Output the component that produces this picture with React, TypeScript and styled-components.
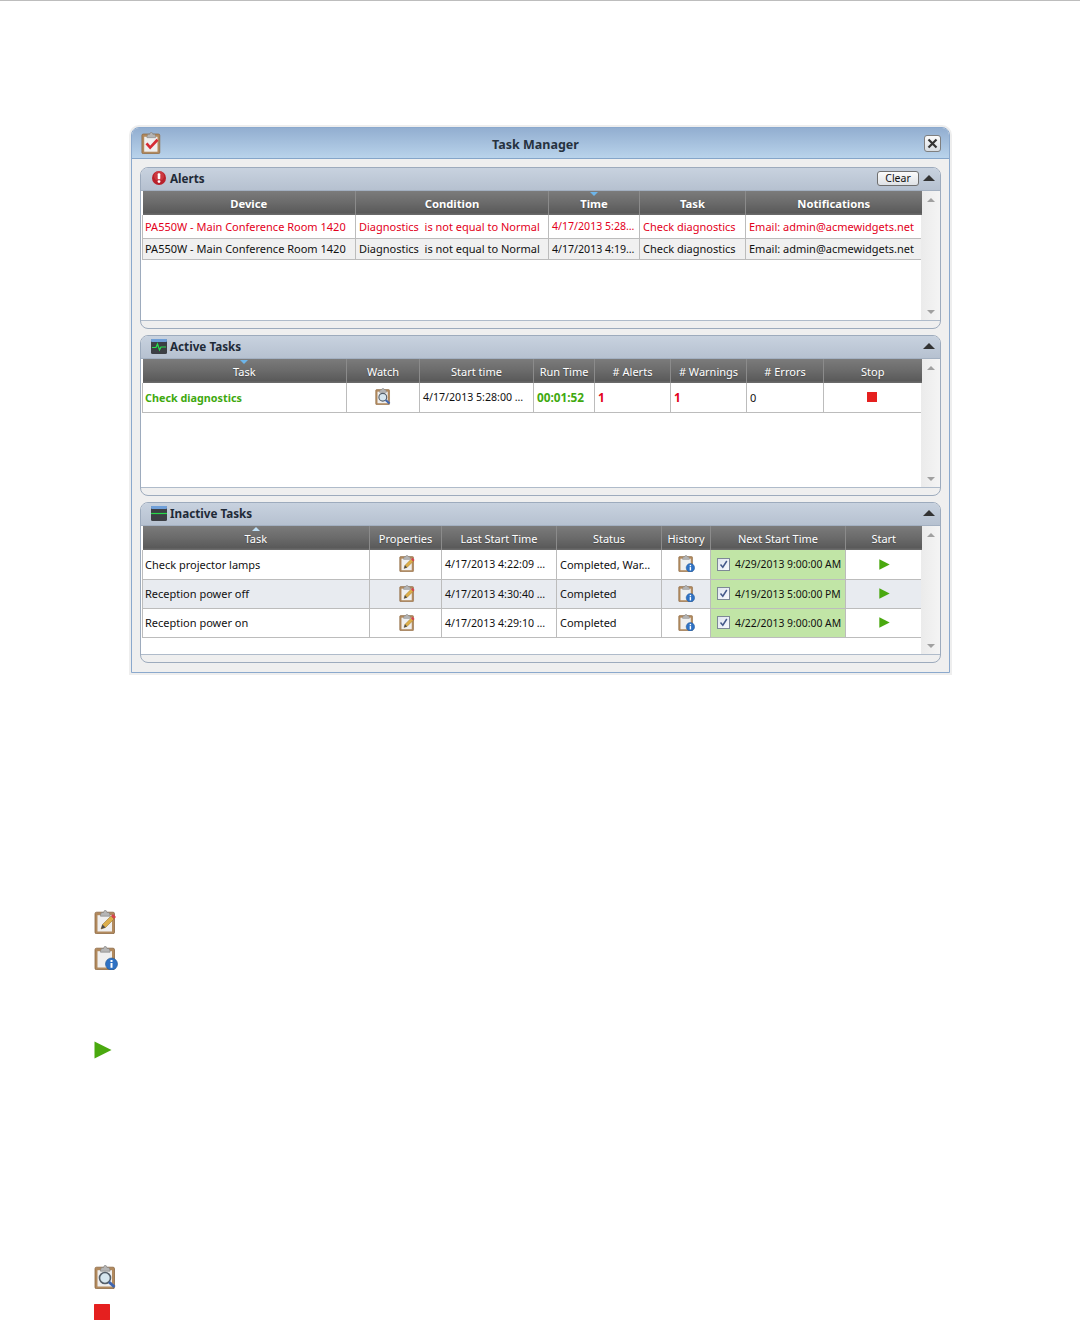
import React from "react";
import styled, { createGlobalStyle } from "styled-components";

const GlobalStyle = createGlobalStyle`
  html, body {
    margin: 0;
    padding: 0;
    background: #ffffff;
  }
  body {
    font-family: "Noto Sans", "Liberation Sans", sans-serif;
    font-size: 11px;
    color: #111111;
  }
`;

const Page = styled.div`
  height: 1322px;
  border-top: 1px solid #bdbdbd;
  box-sizing: border-box;
  padding: 126px 0 0 131px;
  overflow: hidden;
`;

const Window = styled.div`
  width: 819px;
  height: 546px;
  box-sizing: border-box;
  border: 1px solid #8ba9cd;
  border-radius: 8px 8px 0 0;
  background: #efefef;
  box-shadow: 0 0 0 2px #eeeeee;
`;

const TitleBar = styled.div`
  height: 30px;
  display: flex;
  align-items: center;
  padding: 0 8px 0 9px;
  background: linear-gradient(#92aed0, #b9d3eb);
  border-bottom: 1px solid #85a5c9;
  border-radius: 7px 7px 0 0;
`;

const Title = styled.div`
  flex: 1;
  text-align: center;
  font-weight: 700;
  font-size: 12.5px;
  color: #27323f;
  padding: 2px 16px 0 0;
`;

const CloseButton = styled.button`
  width: 17px;
  height: 17px;
  padding: 0;
  display: flex;
  align-items: center;
  justify-content: center;
  border: 1px solid #7f7f7f;
  border-radius: 3px;
  background: linear-gradient(#fbfbfb, #d8dde2);
`;

const Content = styled.div`
  display: flex;
  flex-direction: column;
  padding: 8px 8px 0 8px;
`;

const Section = styled.section<{ $bodyHeight: number; $top?: number }>`
  width: 801px;
  margin-top: ${(p) => p.$top ?? 0}px;
  box-sizing: border-box;
  border: 1px solid #9dabbd;
  border-radius: 8px;
  display: flex;
  flex-direction: column;
  background: #efefef;

  & > main {
    height: ${(p) => p.$bodyHeight}px;
  }
`;

const SectionHeader = styled.header`
  box-sizing: content-box;
  display: flex;
  align-items: center;
  padding: 0 5px 2px 10px;
  height: 20px;
  background: linear-gradient(#c8d2df, #b6c1d0);
  border-bottom: 1px solid #a3b0c1;
  border-radius: 7px 7px 0 0;
`;

const IconSlot = styled.span`
  width: 16px;
  margin-right: 3px;
  display: flex;
  justify-content: center;
`;

const SectionTitle = styled.span`
  flex: 1;
  font-weight: 700;
  font-size: 11.7px;
  color: #1f2a37;
`;

const ClearButton = styled.button`
  width: 42px;
  height: 15px;
  margin-right: 4px;
  padding: 0;
  font: 10.5px/13px "Noto Sans", sans-serif;
  color: #111111;
  border: 1px solid #6f6f6f;
  border-radius: 3px;
  background: linear-gradient(#fbfbfb, #dfe2e6);
`;

const Collapse = styled.span`
  width: 0;
  height: 0;
  border-left: 6px solid transparent;
  border-right: 6px solid transparent;
  border-bottom: 6px solid #333333;
`;

const SectionBody = styled.main`
  display: flex;
  background: #ffffff;
  padding-left: 1px;
  border-bottom: 1px solid #afbbca;
`;

const TableArea = styled.div`
  flex: 1;
  min-width: 0;
`;

const Grid = styled.table`
  table-layout: fixed;
  border-collapse: collapse;
  width: 779px;
  font-size: 11px;
`;

const HeadCell = styled.th<{ $bold?: boolean }>`
  position: relative;
  height: 24px;
  padding: 1px 0 0;
  box-sizing: border-box;
  font-weight: ${(p) => (p.$bold ? 700 : 400)};
  font-size: ${(p) => (p.$bold ? 11.25 : 11)}px;
  color: #ffffff;
  text-shadow: 0 1px 1px #4a4a4a;
  background: linear-gradient(#7b7b7b 0%, #6a6a6a 50%, #5a5a5a 90%, #6e6e6e 100%);
  border-right: 1px solid #8b8b8b;
  &:first-child {
    box-shadow: -1px 0 0 #6a6a6a;
  }
  &:last-child {
    border-right: none;
  }
`;

const SortMark = styled.span<{ $up?: boolean }>`
  position: absolute;
  top: 1px;
  left: 50%;
  margin-left: -4px;
  width: 0;
  height: 0;
  border-left: 4px solid transparent;
  border-right: 4px solid transparent;
  ${(p) =>
    p.$up
      ? "border-bottom: 4px solid #bfe0f7;"
      : "border-top: 4px solid #6db5ea;"}
`;

const Row = styled.tr<{ $height: number; $bg?: string; $color?: string }>`
  height: ${(p) => p.$height}px;
  background: ${(p) => p.$bg || "#ffffff"};
  color: ${(p) => p.$color || "#111111"};
`;

const Cell = styled.td<{ $green?: boolean; $center?: boolean; $strong?: string }>`
  padding: 0 0 0 3px;
  box-sizing: border-box;
  border: 1px solid #bcbcbc;
  border-top: none;
  white-space: nowrap;
  overflow: hidden;
  text-align: ${(p) => (p.$center ? "center" : "left")};
  ${(p) => (p.$green ? "background: #c1e5a6;" : "")}
  ${(p) => (p.$strong ? `color: ${p.$strong}; font-weight: 700; font-size: 10.8px;` : "")}
  &:first-child {
    padding-left: 2px;
  }
`;

const DateCell = styled(Cell)`
  font-size: 10.6px;
`;

const TimerCell = styled(Cell)`
  font-size: 11.8px;
`;

const CellIcon = styled.span<{ $nudge: number }>`
  display: inline-flex;
  vertical-align: middle;
  margin-top: -3px;
  margin-left: ${(p) => -p.$nudge}px;
`;

const NextStart = styled.span`
  display: flex;
  align-items: center;
  gap: 5px;
  font-size: 10.4px;
`;

const CheckBox = styled.span`
  width: 11px;
  height: 11px;
  margin-left: 3px;
  flex: none;
  display: flex;
  align-items: center;
  justify-content: center;
  border: 1px solid #7d8896;
  background: linear-gradient(135deg, #dfe5ef, #f7f9fc);
`;

const ScrollBar = styled.div`
  width: 19px;
  margin-left: auto;
  flex: none;
  display: flex;
  flex-direction: column;
  justify-content: space-between;
  align-items: center;
  padding: 7px 0 6px;
  box-sizing: border-box;
  background: linear-gradient(90deg, #ebebeb, #f4f4f4);
`;

const Arrow = styled.span<{ $down?: boolean }>`
  width: 0;
  height: 0;
  border-left: 4px solid transparent;
  border-right: 4px solid transparent;
  ${(p) =>
    p.$down ? "border-top: 4px solid #a0a0a0;" : "border-bottom: 4px solid #a0a0a0;"}
`;

const SectionFooter = styled.div`
  height: 7px;
`;

const Legend = styled.div`
  margin-top: 237px;
  margin-left: -37px;
  display: flex;
  flex-direction: column;
  align-items: flex-start;
`;

const LegendIcon = styled.div<{ $top: number }>`
  margin-top: ${(p) => p.$top}px;
  display: flex;
`;

type ClipKind = "check" | "edit" | "info" | "watch";

const Clipboard = ({ kind, size }: { kind: ClipKind; size: number }) => (
  <svg width={size} height={size} viewBox="0 0 24 24">
    <rect x="1" y="2.2" width="19.5" height="21.5" rx="1.5" fill="#b28a5e" stroke="#8a6742" strokeWidth="0.8" />
    <rect x="3.5" y="5.2" width="14.5" height="16.3" fill="#efefef" />
    <path d="M6.5 4.8 L7.5 2.5 H9.5 L10.5 0.4 H12 L13 2.5 H15 L16 4.8 V6.2 H6.5 Z" fill="#b5b5b5" stroke="#808080" strokeWidth="0.6" />
    {kind === "check" && (
      <path d="M6 12.5 L10 17 L18 8.5" fill="none" stroke="#d62b35" strokeWidth="3" />
    )}
    {kind === "edit" && (
      <>
        <path d="M7 19 L8.5 14.5 L17 6 L20 9 L11.5 17.5 Z" fill="#dcae4a" stroke="#8c6a1f" strokeWidth="0.5" />
        <path d="M17 6 L19 4 L22 7 L20 9 Z" fill="#d8434c" />
        <path d="M7 19 L8.5 14.5 L11.5 17.5 Z" fill="#4a4a4a" />
      </>
    )}
    {kind === "info" && (
      <>
        <circle cx="17.5" cy="18" r="6" fill="#2f72c4" stroke="#1f548f" strokeWidth="0.6" />
        <rect x="16.5" y="17" width="2" height="4.8" fill="#ffffff" />
        <rect x="16.5" y="14" width="2" height="2" fill="#ffffff" />
      </>
    )}
    {kind === "watch" && (
      <>
        <circle cx="11" cy="13" r="5.5" fill="#d6e6ef" stroke="#555f69" strokeWidth="1.6" />
        <path d="M15 17 L20.5 22" stroke="#3f66b0" strokeWidth="3" />
      </>
    )}
  </svg>
);

const Play = ({ size }: { size: number }) => (
  <svg width={size} height={size} viewBox="0 0 18 18">
    <path d="M0.5 0.5 L17.5 9 L0.5 17.5 Z" fill="#4aa90f" />
  </svg>
);

const Stop = ({ size }: { size: number }) => (
  <svg width={size} height={size} viewBox="0 0 16 16">
    <rect width="16" height="16" rx="0.5" fill="#e5201f" />
  </svg>
);

const AlertIcon = () => (
  <svg width="14" height="14" viewBox="0 0 14 14">
    <circle cx="7" cy="7" r="7" fill="#b9212b" />
    <circle cx="7" cy="5" r="5" fill="#d9474e" opacity="0.6" />
    <rect x="5.7" y="2.3" width="2.6" height="6" rx="1" fill="#ffffff" />
    <circle cx="7" cy="10.6" r="1.4" fill="#ffffff" />
  </svg>
);

const MonitorIcon = ({ wave }: { wave: boolean }) => (
  <svg width="16" height="15" viewBox="0 0 16 15">
    <rect x="0" y="0" width="16" height="15" rx="1.5" fill="#3c3f44" />
    <rect x="0" y="0" width="16" height="3" rx="1" fill="#6f9fd8" />
    {wave ? (
      <path d="M1 8.5 H5 L6.5 5 L8.5 11 L10 8 H15" fill="none" stroke="#27e04e" strokeWidth="1.2" />
    ) : (
      <path d="M0 7.5 H16" stroke="#27d94a" strokeWidth="1.2" />
    )}
  </svg>
);

const CloseGlyph = () => (
  <svg width="11" height="11" viewBox="0 0 11 11">
    <path d="M1.5 1.5 L9.5 9.5 M9.5 1.5 L1.5 9.5" stroke="#333333" strokeWidth="2.2" />
  </svg>
);

const CheckGlyph = () => (
  <svg width="9" height="9" viewBox="0 0 9 9">
    <path d="M1.5 4.5 L3.8 7.2 L7.8 1" fill="none" stroke="#44598a" strokeWidth="1.5" />
  </svg>
);

const Columns = ({ widths }: { widths: number[] }) => (
  <colgroup>
    {widths.map((w, i) => (
      <col key={i} width={w} />
    ))}
  </colgroup>
);

const alerts = [
  { bg: "#ffffff", color: "#e3001b", height: 23, time: "4/17/2013 5:28…" },
  { bg: "#f0f0f0", color: "#111111", height: 21, time: "4/17/2013 4:19…" },
];

const inactive = [
  { task: "Check projector lamps", last: "4/17/2013 4:22:09 …", status: "Completed, War…", next: "4/29/2013 9:00:00 AM", bg: "#ffffff" },
  { task: "Reception power off", last: "4/17/2013 4:30:40 …", status: "Completed", next: "4/19/2013 5:00:00 PM", bg: "#e8ebf0" },
  { task: "Reception power on", last: "4/17/2013 4:29:10 …", status: "Completed", next: "4/22/2013 9:00:00 AM", bg: "#ffffff" },
];

const Scroll = () => (
  <ScrollBar>
    <Arrow />
    <Arrow $down />
  </ScrollBar>
);

export default function App() {
  return (
    <>
      <GlobalStyle />
      <Page>
        <Window>
          <TitleBar>
            <Clipboard kind="check" size={22} />
            <Title>Task Manager</Title>
            <CloseButton>
              <CloseGlyph />
            </CloseButton>
          </TitleBar>
          <Content>
            <Section $bodyHeight={129}>
              <SectionHeader>
                <IconSlot>
                  <AlertIcon />
                </IconSlot>
                <SectionTitle>Alerts</SectionTitle>
                <ClearButton>Clear</ClearButton>
                <Collapse />
              </SectionHeader>
              <SectionBody>
                <TableArea>
                  <Grid>
                    <Columns widths={[213, 193, 91, 106, 176]} />
                    <thead>
                      <tr>
                        <HeadCell $bold>Device</HeadCell>
                        <HeadCell $bold>Condition</HeadCell>
                        <HeadCell $bold>
                          <SortMark />
                          Time
                        </HeadCell>
                        <HeadCell $bold>Task</HeadCell>
                        <HeadCell $bold>Notifications</HeadCell>
                      </tr>
                    </thead>
                    <tbody>
                      {alerts.map((a) => (
                        <Row key={a.time} $height={a.height} $bg={a.bg} $color={a.color}>
                          <Cell>PA550W - Main Conference Room 1420</Cell>
                          <Cell>Diagnostics&nbsp; is not equal to Normal</Cell>
                          <DateCell>{a.time}</DateCell>
                          <Cell>Check diagnostics</Cell>
                          <Cell>Email: admin@acmewidgets.net</Cell>
                        </Row>
                      ))}
                    </tbody>
                  </Grid>
                </TableArea>
                <Scroll />
              </SectionBody>
              <SectionFooter />
            </Section>

            <Section $bodyHeight={128} $top={6}>
              <SectionHeader>
                <IconSlot>
                  <MonitorIcon wave />
                </IconSlot>
                <SectionTitle>Active Tasks</SectionTitle>
                <Collapse />
              </SectionHeader>
              <SectionBody>
                <TableArea>
                  <Grid>
                    <Columns widths={[204, 73, 114, 61, 76, 76, 77, 98]} />
                    <thead>
                      <tr>
                        <HeadCell>
                          <SortMark />
                          Task
                        </HeadCell>
                        <HeadCell>Watch</HeadCell>
                        <HeadCell>Start time</HeadCell>
                        <HeadCell>Run Time</HeadCell>
                        <HeadCell># Alerts</HeadCell>
                        <HeadCell># Warnings</HeadCell>
                        <HeadCell># Errors</HeadCell>
                        <HeadCell>Stop</HeadCell>
                      </tr>
                    </thead>
                    <tbody>
                      <Row $height={29}>
                        <Cell $strong="#3fa90f">Check diagnostics</Cell>
                        <Cell $center>
                          <CellIcon $nudge={2}>
                            <Clipboard kind="watch" size={17} />
                          </CellIcon>
                        </Cell>
                        <DateCell>4/17/2013 5:28:00 …</DateCell>
                        <TimerCell $strong="#3fa90f">00:01:52</TimerCell>
                        <TimerCell $strong="#e3001b">1</TimerCell>
                        <TimerCell $strong="#e3001b">1</TimerCell>
                        <Cell>0</Cell>
                        <Cell $center>
                          <CellIcon $nudge={4}>
                            <Stop size={10} />
                          </CellIcon>
                        </Cell>
                      </Row>
                    </tbody>
                  </Grid>
                </TableArea>
                <Scroll />
              </SectionBody>
              <SectionFooter />
            </Section>

            <Section $bodyHeight={128} $top={6}>
              <SectionHeader>
                <IconSlot>
                  <MonitorIcon wave={false} />
                </IconSlot>
                <SectionTitle>Inactive Tasks</SectionTitle>
                <Collapse />
              </SectionHeader>
              <SectionBody>
                <TableArea>
                  <Grid>
                    <Columns widths={[227, 72, 115, 105, 49, 135, 76]} />
                    <thead>
                      <tr>
                        <HeadCell>
                          <SortMark $up />
                          Task
                        </HeadCell>
                        <HeadCell>Properties</HeadCell>
                        <HeadCell>Last Start Time</HeadCell>
                        <HeadCell>Status</HeadCell>
                        <HeadCell>History</HeadCell>
                        <HeadCell>Next Start Time</HeadCell>
                        <HeadCell>Start</HeadCell>
                      </tr>
                    </thead>
                    <tbody>
                      {inactive.map((t) => (
                        <Row key={t.task} $height={29} $bg={t.bg}>
                          <Cell>{t.task}</Cell>
                          <Cell $center>
                            <CellIcon $nudge={0}>
                              <Clipboard kind="edit" size={17} />
                            </CellIcon>
                          </Cell>
                          <DateCell>{t.last}</DateCell>
                          <Cell>{t.status}</Cell>
                          <Cell $center>
                            <CellIcon $nudge={2}>
                              <Clipboard kind="info" size={17} />
                            </CellIcon>
                          </Cell>
                          <Cell $green>
                            <NextStart>
                              <CheckBox>
                                <CheckGlyph />
                              </CheckBox>
                              {t.next}
                            </NextStart>
                          </Cell>
                          <Cell $center>
                            <CellIcon $nudge={2}>
                              <Play size={11} />
                            </CellIcon>
                          </Cell>
                        </Row>
                      ))}
                    </tbody>
                  </Grid>
                </TableArea>
                <Scroll />
              </SectionBody>
              <SectionFooter />
            </Section>
          </Content>
        </Window>
        <Legend>
          <LegendIcon $top={0}>
            <Clipboard kind="edit" size={24} />
          </LegendIcon>
          <LegendIcon $top={12}>
            <Clipboard kind="info" size={24} />
          </LegendIcon>
          <LegendIcon $top={71}>
            <Play size={18} />
          </LegendIcon>
          <LegendIcon $top={206}>
            <Clipboard kind="watch" size={24} />
          </LegendIcon>
          <LegendIcon $top={15}>
            <Stop size={16} />
          </LegendIcon>
        </Legend>
      </Page>
    </>
  );
}
